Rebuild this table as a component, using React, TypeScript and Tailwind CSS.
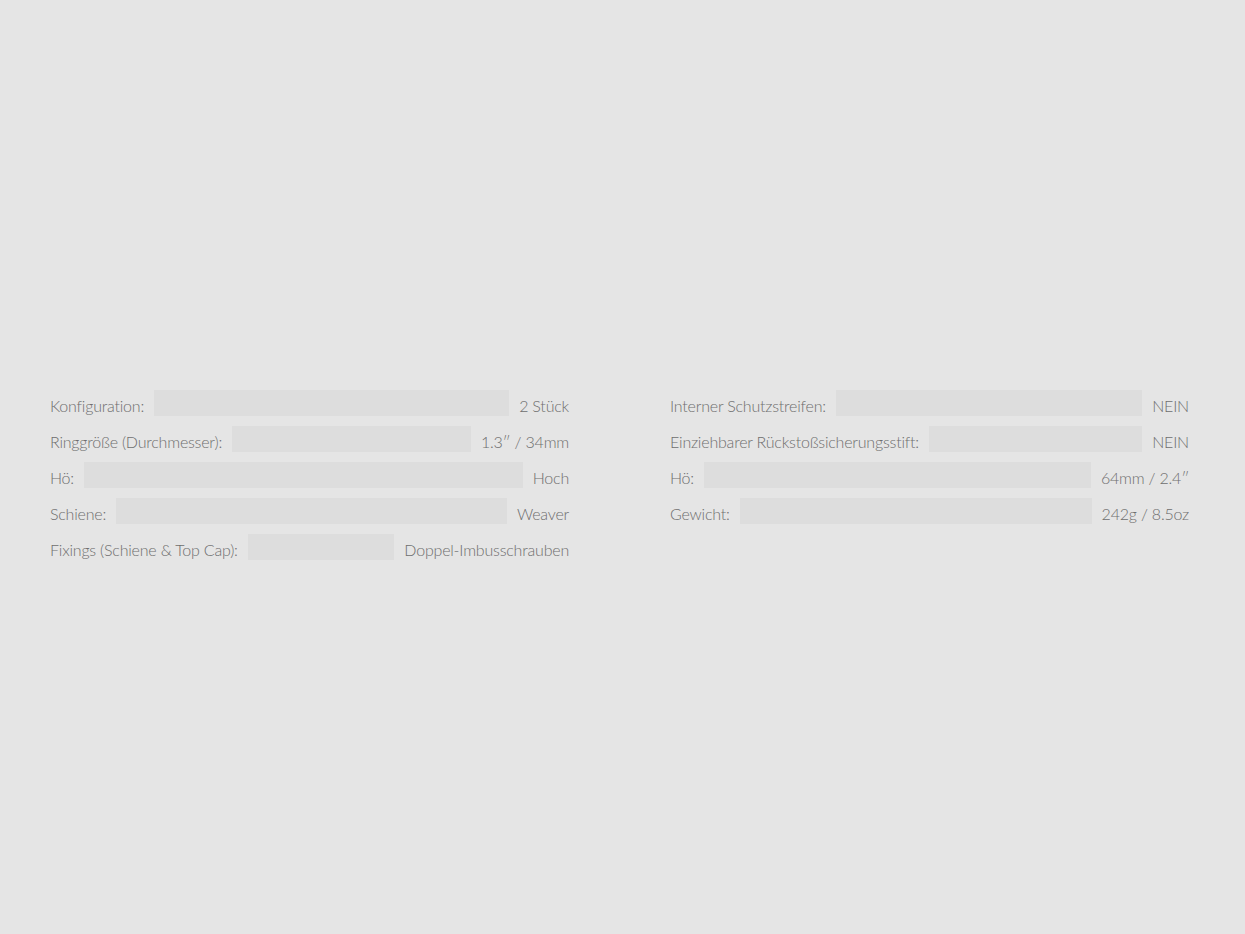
import React from "react";

const left: [string, string][] = [
  ["Konfiguration:", "2 Stück"],
  ["Ringgröße (Durchmesser):", "1.3″ / 34mm"],
  ["Hö:", "Hoch"],
  ["Schiene:", "Weaver"],
  ["Fixings (Schiene & Top Cap):", "Doppel-Imbusschrauben"],
];
const right: [string, string][] = [
  ["Interner Schutzstreifen:", "NEIN"],
  ["Einziehbarer Rückstoßsicherungsstift:", "NEIN"],
  ["Hö:", "64mm / 2.4″"],
  ["Gewicht:", "242g / 8.5oz"],
];

function Row({ label, value }: { label: string; value: string }) {
  return (
    <div className="flex h-[26px] items-center gap-[10px]">
      <span className="whitespace-nowrap pt-[5px]">{label}</span>
      <div className="h-[26px] flex-1 bg-[#dddddd]" />
      <span className="whitespace-nowrap pt-[5px]">{value}</span>
    </div>
  );
}

export default function App() {
  return (
    <div
      className="min-h-[934px] w-full bg-[#e5e5e5] text-[16px] font-light tracking-[-0.2px] text-[#6e6e6e]"
      style={{ fontFamily: "Lato, 'Noto Sans', sans-serif" }}
    >
      <div className="grid grid-cols-[519px_519px] gap-x-[101px] pl-[50px] pt-[390px]">
        <div className="flex flex-col gap-[10px]">
          {left.map(([l, v]) => (
            <Row key={l} label={l} value={v} />
          ))}
        </div>
        <div className="flex flex-col gap-[10px]">
          {right.map(([l, v]) => (
            <Row key={l + v} label={l} value={v} />
          ))}
        </div>
      </div>
    </div>
  );
}
